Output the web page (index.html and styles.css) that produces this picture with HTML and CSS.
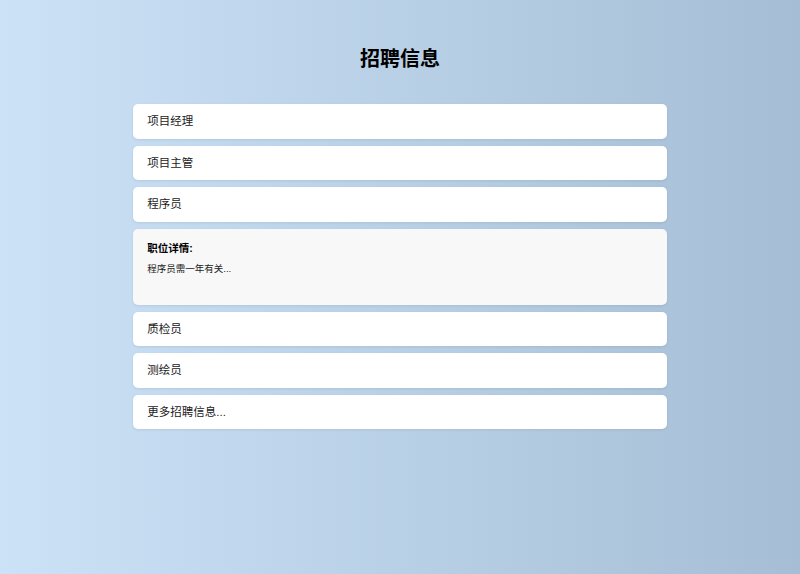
FILE: index.html
```html
<!DOCTYPE html>
<html lang="zh">
<head>
<meta charset="utf-8">
<title>招聘信息</title>
<link rel="stylesheet" href="styles.css">
</head>
<body>
<div class="page">
  <h1 class="title">招聘信息</h1>
  <ul class="jobs">
    <li class="job">项目经理</li>
    <li class="job">项目主管</li>
    <li class="job">程序员</li>
    <li class="detail">
      <div class="detail-title">职位详情:</div>
      <div class="detail-text">程序员需一年有关...</div>
    </li>
    <li class="job">质检员</li>
    <li class="job">测绘员</li>
    <li class="job">更多招聘信息...</li>
  </ul>
</div>
</body>
</html>
```

FILE: styles.css
```css
html, body {
  margin: 0;
  padding: 0;
  height: 100%;
}
body {
  background: linear-gradient(to right, #cbe2f7, #a6bed5);
  font-family: "Liberation Sans", "Noto Sans CJK SC", sans-serif;
  color: #222;
}
.page {
  width: 66.67%;
  margin: 0 auto;
  padding-top: 41px;
}
.title {
  margin: 0 0 27px;
  font-size: 20px;
  line-height: 36px;
  font-weight: bold;
  text-align: center;
  color: #000;
}
.jobs {
  list-style: none;
  margin: 0;
  padding: 0;
  display: flex;
  flex-direction: column;
  gap: 7px;
}
.job {
  height: 33.5px;
  line-height: 33.5px;
  padding: 1px 14px 0;
  background: #fff;
  border-radius: 5px;
  box-shadow: 0 1px 3px rgba(0, 0, 0, 0.08);
  font-size: 11.5px;
  color: #222;
}
.detail {
  height: 76px;
  box-sizing: border-box;
  padding: 12px 14px;
  background: #f8f8f8;
  border-radius: 5px;
  box-shadow: 0 1px 3px rgba(0, 0, 0, 0.08);
}
.detail-title {
  font-size: 10.5px;
  font-weight: bold;
  line-height: 14px;
  color: #000;
}
.detail-text {
  margin-top: 7px;
  font-size: 9.5px;
  line-height: 14px;
  color: #222;
}
```
